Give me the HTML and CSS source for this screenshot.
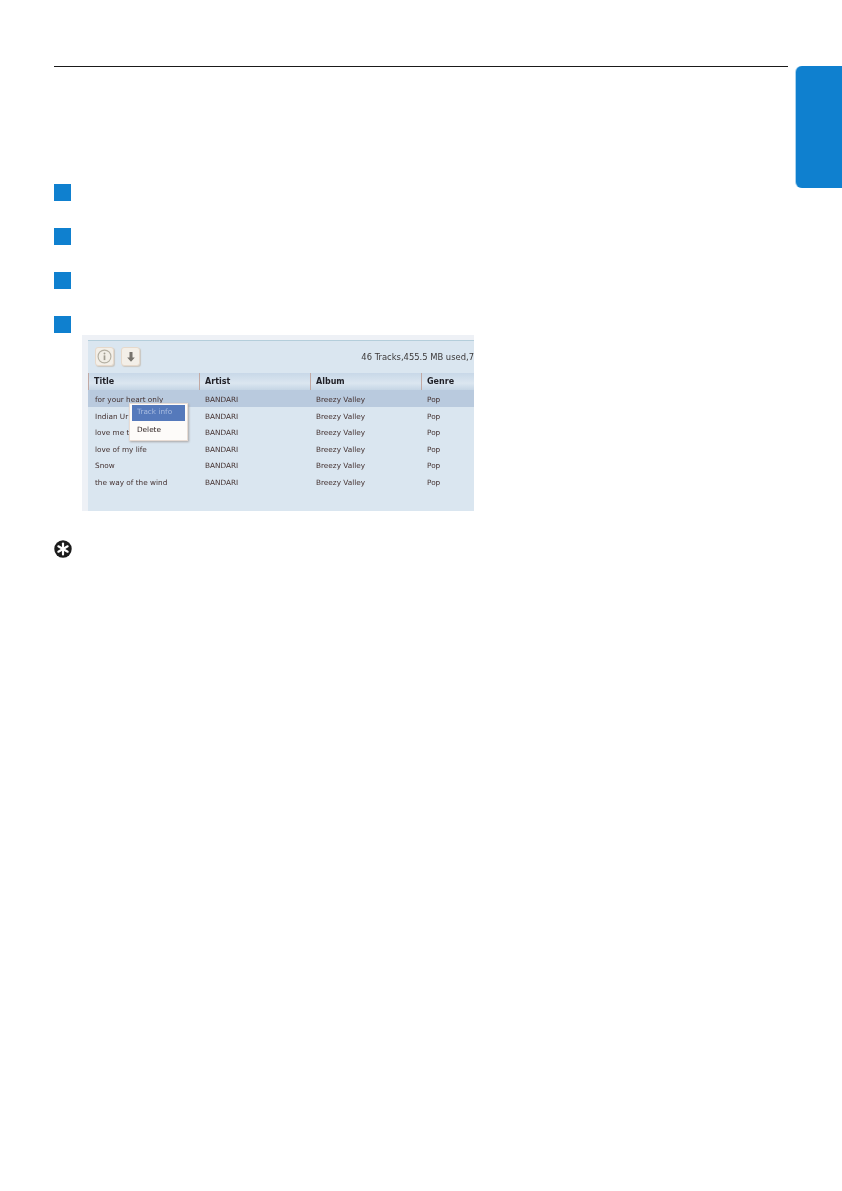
FILE: index.html
```html
<!DOCTYPE html>
<html lang="en">
<head>
<meta charset="utf-8">
<title>Track list</title>
<link rel="stylesheet" href="styles.css">
</head>
<body>
<div class="page">
  <main class="main">
    <div class="steps">
      <div class="square"></div>
      <div class="square"></div>
      <div class="square"></div>
      <div class="square"></div>
    </div>
    <section class="shot">
      <div class="shot-inner">
        <div class="toolbar">
          <div class="tool">
            <svg width="17" height="17" viewBox="0 0 18 18"><circle cx="9" cy="9" r="6.8" fill="#f1eee6" stroke="#b3afa2" stroke-width="1.2"/><circle cx="9" cy="5.8" r="1" fill="#a09c90"/><rect x="8.1" y="7.8" width="1.8" height="5" fill="#a09c90"/></svg>
          </div>
          <div class="tool">
            <svg width="14" height="14" viewBox="0 0 14 14"><path d="M5.5 2h3v5.4h2.3L7 11.8 3.2 7.4h2.3z" fill="#77736c"/></svg>
          </div>
          <div class="status">46 Tracks,455.5 MB used,7</div>
        </div>
        <div class="grid header">
          <div>Title</div><div>Artist</div><div>Album</div><div>Genre</div>
        </div>
        <div class="grid row selected"><div>for your heart only</div><div>BANDARI</div><div>Breezy Valley</div><div>Pop</div></div>
        <div class="grid row"><div>Indian Ur</div><div>BANDARI</div><div>Breezy Valley</div><div>Pop</div></div>
        <div class="grid row"><div>love me t</div><div>BANDARI</div><div>Breezy Valley</div><div>Pop</div></div>
        <div class="grid row"><div>love of my life</div><div>BANDARI</div><div>Breezy Valley</div><div>Pop</div></div>
        <div class="grid row"><div>Snow</div><div>BANDARI</div><div>Breezy Valley</div><div>Pop</div></div>
        <div class="grid row"><div>the way of the wind</div><div>BANDARI</div><div>Breezy Valley</div><div>Pop</div></div>
        <div class="menu">
          <div class="menu-item active">Track info</div>
          <div class="menu-item">Delete</div>
        </div>
      </div>
    </section>
    <div class="tip">
      <svg width="18" height="18" viewBox="0 0 19 19"><circle cx="9.5" cy="9.5" r="9.2" fill="#1c1c1c"/><g stroke="#fff" stroke-width="2.3" stroke-linecap="round"><path d="M9.5 3.8v11.4"/><path d="M4.6 6.65l9.8 5.7"/><path d="M4.6 12.35l9.8-5.7"/></g></svg>
    </div>
  </main>
  <aside class="tab"></aside>
</div>
</body>
</html>
```
FILE: styles.css
```css
* { box-sizing: border-box; }
html, body { margin: 0; padding: 0; background: #fff; }
body { font-family: "DejaVu Sans", Verdana, sans-serif; }
.page {
  width: 842px;
  height: 1191px;
  padding: 66px 0 0 54px;
  display: flex;
  align-items: flex-start;
  gap: 8px;
}
.main {
  width: 734px;
  border-top: 1px solid #1a1a1a;
  padding-top: 117px;
}
.steps { display: flex; flex-direction: column; gap: 27px; }
.square { width: 17px; height: 17px; background: #0f80cf; }
.shot {
  width: 392px;
  height: 176px;
  margin: 2px 0 0 28px;
  padding: 5px 0 0 6px;
  background: #eef1f6;
  overflow: hidden;
}
.shot-inner {
  position: relative;
  height: 171px;
  background: #dae6f0;
  border-top: 1px solid #b4cedb;
  filter: blur(0.45px);
}
.toolbar {
  height: 32px;
  padding: 6px 0 0 7px;
  display: flex;
  align-items: flex-start;
  gap: 7px;
}
.tool {
  width: 19px;
  height: 19px;
  display: flex;
  align-items: center;
  justify-content: center;
  background: #f3efe8;
  border: 1px solid #e6d9cb;
  border-radius: 3px;
  box-shadow: 1px 1px 1px #c9c6c0;
}
.status {
  margin-left: auto;
  padding-top: 5px;
  font-size: 8.4px;
  color: #3b3838;
  white-space: nowrap;
}
.grid {
  display: grid;
  grid-template-columns: 111px 111px 111px 1fr;
  font-size: 7.3px;
  color: #43302f;
  white-space: nowrap;
}
.grid > div { padding-left: 6px; }
.row > div:first-child { padding-left: 7px; }
.header {
  height: 17px;
  font-size: 8px;
  font-weight: 700;
  color: #1f1f26;
  background: linear-gradient(#c8d8e8, #dbe6f0 60%, #c5d5e5);
}
.grid.header > div {
  height: 100%;
  line-height: 17px;
  padding-left: 5px;
  border-left: 1px solid #c2a9a4;
}
.row { height: 16.6px; line-height: 20px; }
.selected { background: #b9cade; }
.menu {
  position: absolute;
  left: 41px;
  top: 62px;
  width: 59px;
  height: 38px;
  padding: 1px 2px;
  background: #fdfbf9;
  border: 1px solid #e8dcd4;
  box-shadow: 1px 1px 2px #a9a6a6;
  font-size: 7.3px;
  color: #2e2222;
}
.menu-item { height: 16px; line-height: 14px; padding-left: 5px; }
.menu-item.active { background: #5579bb; color: #a9bce0; }
.menu-item + .menu-item { line-height: 18px; }
.tip { margin: 29px 0 0; height: 18px; }
.tip svg { display: block; }
.tab {
  width: 46px;
  height: 122px;
  background: #0f80cf;
  border-radius: 6px 0 0 6px;
  box-shadow: -1px 0 0 #a9d2ee;
}
```
